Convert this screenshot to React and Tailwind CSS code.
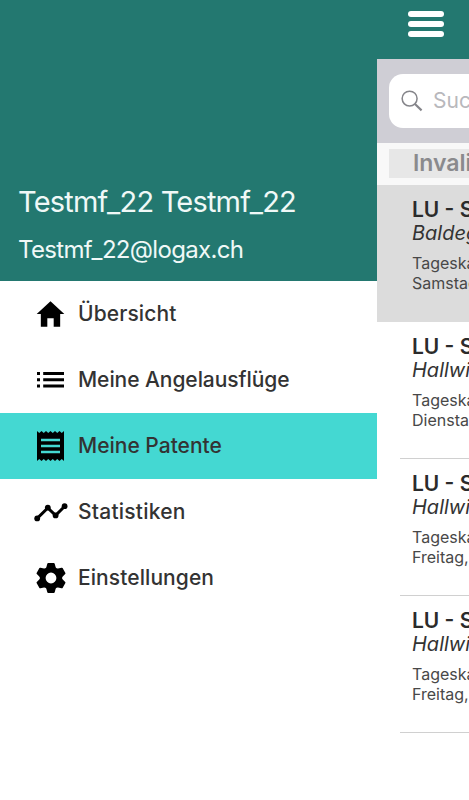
import React from "react";
import { IoMdHome } from "react-icons/io";

const ListIcon = () => (
  <svg className="w-[27px] h-[16px]" viewBox="0 0 27 16" fill="currentColor">
    <path d="M0 0h3v3H0zM0 6.3h3v3H0zM0 12.6h3v3H0zM6.2 0H27v3H6.2zM6.2 6.3H27v3H6.2zM6.2 12.6H27v3H6.2z" />
  </svg>
);

const PaperIcon = () => (
  <svg className="w-[27px] h-[30px]" viewBox="0 0 27 30">
    <path
      fill="currentColor"
      d="M0 0l2.25 2L4.5 0l2.25 2L9 0l2.25 2L13.5 0l2.25 2L18 0l2.25 2L22.5 0l2.25 2L27 0v30l-2.25-2-2.25 2-2.25-2L18 30l-2.25-2-2.25 2-2.25-2L9 30l-2.25-2L4.5 30l-2.25-2L0 30z"
    />
    <path
      stroke="#44d8d2"
      strokeWidth="2.5"
      d="M4 8.9h19M4 15h19M4 21.1h19"
    />
  </svg>
);

const ChartIcon = () => (
  <svg className="w-[34px] h-[20px]" viewBox="0 0 34 20" fill="currentColor">
    <path
      d="M3.2 16.4L13.8 5.9L21.6 13.4L30.6 4.4"
      fill="none"
      stroke="currentColor"
      strokeWidth="2.9"
    />
    <circle cx="3.2" cy="16.4" r="2.9" />
    <circle cx="13.8" cy="5.6" r="2.9" />
    <circle cx="21.6" cy="13.4" r="2.9" />
    <circle cx="30.6" cy="4.2" r="2.9" />
  </svg>
);

const GearIcon = () => (
  <svg className="w-[30px] h-[30px]" viewBox="-15 -15 30 30" fill="currentColor">
    <circle r="8.3" fill="none" stroke="currentColor" strokeWidth="5.8" />
    {[0, 60, 120, 180, 240, 300].map((angle) => (
      <path
        key={angle}
        transform={`rotate(${angle})`}
        d="M-5-9.6L-3.7-14.2Q-3.5-15-2.8-15H2.8Q3.5-15 3.7-14.2L5-9.6z"
      />
    ))}
  </svg>
);

const menuItems = [
  { label: "Übersicht", icon: <IoMdHome className="w-[35px] h-[34px]" />, text: "tracking-[0.1px]" },
  { label: "Meine Angelausflüge", icon: <ListIcon />, text: "tracking-[-0.06px]" },
  { label: "Meine Patente", icon: <PaperIcon />, text: "", active: true },
  { label: "Statistiken", icon: <ChartIcon />, text: "tracking-[0.22px]" },
  { label: "Einstellungen", icon: <GearIcon />, text: "tracking-[0.08px]" },
];

const permits = [
  { title: "LU - See", lake: "Baldegg", type: "Tageskarte", day: "Samstag", active: true },
  { title: "LU - See", lake: "Hallwil", type: "Tageskarte", day: "Dienstag" },
  { title: "LU - See", lake: "Hallwil", type: "Tageskarte", day: "Freitag," },
  { title: "LU - See", lake: "Hallwil", type: "Tageskarte", day: "Freitag," },
];

const Drawer = () => (
  <aside className="w-[377px] shrink-0 bg-white">
    {/* Account */}
    <div className="h-[281px] bg-[#237870] pl-[18px] pt-[184px] text-[#f0f8f7] whitespace-nowrap">
      <div className="text-[29px] leading-[36px] tracking-[-0.8px]">
        Testmf_22 Testmf_22
      </div>
      <div className="mt-[14px] text-[24px] leading-[32px] tracking-[-0.68px]">
        Testmf_22@logax.ch
      </div>
    </div>

    {/* Menu */}
    <nav>
      {menuItems.map((item) => (
        <a
          key={item.label}
          className={`flex items-center h-[66px] pl-[30.5px] ${
            item.active ? "bg-[#44d8d2]" : ""
          }`}
        >
          <span className="w-10 flex justify-center text-black">
            {item.icon}
          </span>
          <span
            className={`ml-[7.5px] text-[21px] font-medium text-[#333] whitespace-nowrap ${item.text}`}
          >
            {item.label}
          </span>
        </a>
      ))}
    </nav>
  </aside>
);

const Permit = ({ permit }) => (
  <div className={`h-[137px] ${permit.active ? "bg-[#dcdcdc]" : "bg-white"}`}>
    <div
      className={`h-full pt-[13px] whitespace-nowrap ${
        permit.active
          ? "pl-[35px]"
          : "ml-[23px] pl-3 border-b border-[#d0d0d0]"
      }`}
    >
      <div className="text-[21px] leading-[24px] font-semibold text-[#2b2b2b]">
        {permit.title}
      </div>
      <div className="text-[20px] leading-[22px] italic text-[#333]">
        {permit.lake}
      </div>
      <div className="mt-[9px] text-[16px] leading-[20px] text-[#484848]">
        <div>{permit.type}</div>
        <div>{permit.day}</div>
      </div>
    </div>
  </div>
);

const PermitPage = () => (
  <main className="w-[377px] shrink-0 bg-white">
    <header className="h-[59px] bg-[#237870] pl-[31px] pt-[11px]">
      <button className="flex flex-col gap-1 w-9">
        <span className="h-[6px] rounded-full bg-white" />
        <span className="h-[6px] rounded-full bg-white" />
        <span className="h-[6px] rounded-full bg-white" />
      </button>
    </header>

    <div className="h-[84px] bg-[#cfced5] pl-3 pt-[15px]">
      <div className="h-[54px] rounded-l-[14px] bg-white flex items-center pl-3">
        <svg
          className="w-[22px] h-[22px]"
          viewBox="0 0 23 23"
          fill="none"
          stroke="#85858a"
          strokeWidth="1.6"
        >
          <circle cx="9" cy="9" r="7.8" />
          <path d="M14.6 14.6L21.5 21.3" strokeWidth="2.2" />
        </svg>
        <span className="ml-[10px] text-[21px] text-[#b8b8bc]">Suchen</span>
      </div>
    </div>

    <div className="h-[42px] bg-[#f8f8f8] pl-3 pt-[6px]">
      <div className="h-[29px] bg-[#e7e7e7] pl-6 text-[23px] leading-[29px] font-semibold text-[#8a8a8d]">
        Invalid
      </div>
    </div>

    {permits.map((permit, i) => (
      <Permit key={i} permit={permit} />
    ))}
  </main>
);

const App = () => {
  return (
    <div className="flex w-[469px] h-[800px] overflow-hidden bg-white font-['Inter',sans-serif]">
      <Drawer />
      <PermitPage />
    </div>
  );
};

export default App;
